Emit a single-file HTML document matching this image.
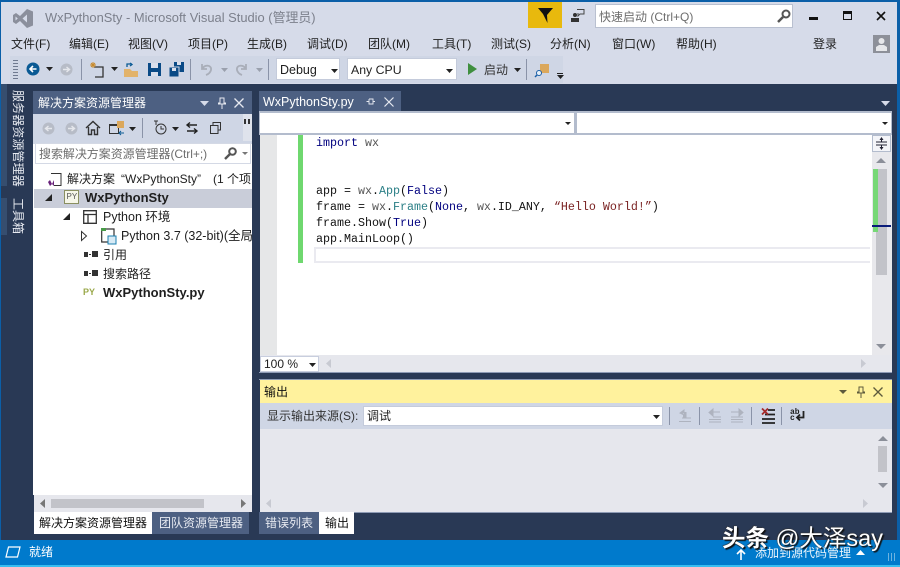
<!DOCTYPE html>
<html><head><meta charset="utf-8"><style>
html,body{margin:0;padding:0;width:900px;height:567px;overflow:hidden;background:#293955}
*{box-sizing:border-box}
.a,.t{position:absolute}
.t{white-space:nowrap;font:12px/16px "Liberation Sans","Noto Sans CJK SC",sans-serif;color:#1e1e1e}
svg{position:absolute;overflow:visible}
.c{font:11.67px/16px "Liberation Mono",monospace;color:#111;left:316px}
.k{color:#00007f}.m{color:#2b7f86}.s{color:#7a2222}.p{color:#555}
.sep{position:absolute;width:1px;background:#8a93a8}
</style></head><body>
<div class="a" style="left:0;top:0;width:900px;height:84px;background:#d6dbe9"></div>
<div class="a" style="left:0;top:0;width:900px;height:2px;background:#0b5fa8"></div>
<div class="a" style="left:0;top:0;width:1px;height:567px;background:#0b5fa8"></div>
<div class="a" style="left:897px;top:0;width:3px;height:567px;background:#0b5fa8"></div>
<div class="a" style="left:4px;top:84px;width:893px;height:456px;background:#293955"></div>
<div class="a" style="left:1px;top:84px;width:6px;height:102px;background:#364e6f"></div>
<div class="a" style="left:1px;top:198px;width:6px;height:37px;background:#364e6f"></div>

<!-- title -->
<svg style="left:13px;top:9px" width="21" height="20"><path d="M14 0 20 2.500V16.500L14 19 7 12 3 15 0 13V6L3 4 7 7ZM2.500 7.500V11.500L4.800 9.500ZM14 5.500 9.500 9.500 14 13.500Z" fill="#8b8f9c" fill-rule="evenodd"/></svg>
<div class="t" style="left:45px;top:10px;font-size:12.900px;color:#7c808c">WxPythonSty - Microsoft Visual Studio (管理员)</div>
<div class="a" style="left:528px;top:2px;width:34px;height:26px;background:#e8b90d"></div>
<svg style="left:538px;top:8px" width="16" height="16"><path d="M0 0H15L9 7 9.500 15 5 6Z" fill="#111"/></svg>
<svg style="left:570px;top:8px" width="16" height="15"><path d="M1 14V10H9V14Z M3 7a2 2 0 1 0 4 0a2 2 0 1 0-4 0Z" fill="#333"/><path d="M7 1.500H14V6H10L8 8V5" fill="none" stroke="#444"/></svg>
<div class="a" style="left:595px;top:4px;width:198px;height:24px;background:#fff;border:1px solid #b9c0d0"></div>
<div class="t" style="left:599px;top:9px;color:#6d6d6d">快速启动 (Ctrl+Q)</div>
<svg style="left:777px;top:9px" width="14" height="14"><circle cx="9" cy="5" r="3.500" fill="none" stroke="#555" stroke-width="2"/><path d="M6 8 1 13" stroke="#555" stroke-width="2.500"/></svg>
<div class="a" style="left:809px;top:17px;width:9px;height:3px;background:#111"></div>
<div class="a" style="left:843px;top:11px;width:9px;height:9px;border:1px solid #111;border-top-width:3px"></div>
<svg style="left:876px;top:11px" width="10" height="10"><path d="M1 1 9 9M9 1 1 9" stroke="#111" stroke-width="1.600"/></svg>

<!-- menu -->
<div class="t" style="left:11px;top:36px">文件(F)</div>
<div class="t" style="left:69px;top:36px">编辑(E)</div>
<div class="t" style="left:128px;top:36px">视图(V)</div>
<div class="t" style="left:188px;top:36px">项目(P)</div>
<div class="t" style="left:247px;top:36px">生成(B)</div>
<div class="t" style="left:307px;top:36px">调试(D)</div>
<div class="t" style="left:368px;top:36px">团队(M)</div>
<div class="t" style="left:432px;top:36px">工具(T)</div>
<div class="t" style="left:491px;top:36px">测试(S)</div>
<div class="t" style="left:550px;top:36px">分析(N)</div>
<div class="t" style="left:612px;top:36px">窗口(W)</div>
<div class="t" style="left:676px;top:36px">帮助(H)</div>
<div class="t" style="left:813px;top:36px">登录</div>
<div class="a" style="left:873px;top:35px;width:17px;height:18px;background:#8d9099"></div>
<svg style="left:873px;top:35px" width="17" height="18"><circle cx="8.500" cy="6" r="3" fill="#e6e7ea"/><path d="M3 16V12L6 10H11L14 12V16Z" fill="#e6e7ea"/></svg>

<!-- toolbar -->
<div class="a" style="left:10px;top:56px;width:553px;height:27px;background:#cfd6e5"></div>
<div class="a" style="left:13px;top:60px;width:5px;height:19px;background:repeating-linear-gradient(#6f7a90 0 1px,transparent 1px 3px)"></div>
<svg style="left:26px;top:62px" width="14" height="14"><circle cx="7" cy="7" r="6.500" fill="#0a5a94"/><path d="M10.500 7H4.500M7 4 4 7 7 10" fill="none" stroke="#fff" stroke-width="1.600"/></svg>
<svg style="left:46px;top:67px" width="8" height="4"><path d="M0 0H7L3.500 4Z" fill="#222"/></svg>
<svg style="left:60px;top:63px" width="13" height="13"><circle cx="6.500" cy="6.500" r="6" fill="#b7bcc7"/><path d="M3 6.500H9M6.500 4 9.500 6.500 6.500 9" fill="none" stroke="#e5e7ec" stroke-width="1.400"/></svg>
<div class="sep" style="left:81px;top:59px;height:21px"></div>
<svg style="left:90px;top:62px" width="15" height="16"><path d="M4 5H13V15H5" fill="none" stroke="#333" stroke-width="1.300"/><path d="M3 0V6M0 3H6M1 1 5 5M5 1 1 5" stroke="#c98a2b"/></svg>
<svg style="left:111px;top:67px" width="8" height="4"><path d="M0 0H7L3.500 4Z" fill="#222"/></svg>
<svg style="left:124px;top:63px" width="15" height="15"><path d="M0 6H6L8 8H14V14H0Z" fill="#e2b36b"/><path d="M3 4V1H8M6 0 8 1.500 6 3" fill="none" stroke="#0a5a94" stroke-width="1.300"/></svg>
<svg style="left:148px;top:63px" width="13" height="13"><path d="M0 0H13V13H0Z" fill="#0a4a86"/><path d="M3 0H10V5H3ZM3 9H10V13H3Z" fill="#d9dfec"/></svg>
<svg style="left:169px;top:62px" width="15" height="15"><path d="M5 0H15V10H5Z" fill="#0a4a86"/><path d="M0 5H10V15H0Z" fill="#0a4a86" stroke="#cfd6e5"/><path d="M8 0H12V3H8ZM3 6H7V9H3Z" fill="#d9dfec"/></svg>
<div class="sep" style="left:190px;top:59px;height:21px"></div>
<svg style="left:199px;top:63px" width="14" height="13"><path d="M3 1V6H8M3 6C6 1 13 2 12 7 11.500 9 10 11 7 12" fill="none" stroke="#a9aeb9" stroke-width="1.800"/></svg>
<svg style="left:221px;top:68px" width="7" height="4"><path d="M0 0H7L3.500 4Z" fill="#9aa0ad"/></svg>
<svg style="left:235px;top:63px" width="14" height="13"><path d="M11 1V6H6M11 6C8 1 1 2 2 7 2.500 9 4 11 7 12" fill="none" stroke="#a9aeb9" stroke-width="1.800"/></svg>
<svg style="left:256px;top:68px" width="7" height="4"><path d="M0 0H7L3.500 4Z" fill="#9aa0ad"/></svg>
<div class="sep" style="left:268px;top:59px;height:21px"></div>
<div class="a" style="left:276px;top:58px;width:64px;height:22px;background:#fff;border:1px solid #c4cbdb"></div>
<div class="t" style="left:280px;top:62px;font-size:12.500px">Debug</div>
<svg style="left:331px;top:69px" width="7" height="4"><path d="M0 0H7L3.500 4Z" fill="#222"/></svg>
<div class="a" style="left:347px;top:58px;width:110px;height:22px;background:#fff;border:1px solid #c4cbdb"></div>
<div class="t" style="left:351px;top:62px;font-size:12.300px">Any CPU</div>
<svg style="left:446px;top:69px" width="7" height="4"><path d="M0 0H7L3.500 4Z" fill="#222"/></svg>
<svg style="left:468px;top:63px" width="9" height="12"><path d="M0 0 9 6 0 12Z" fill="#3f8f3f"/></svg>
<div class="t" style="left:484px;top:62px;color:#333">启动</div>
<svg style="left:514px;top:68px" width="7" height="4"><path d="M0 0H7L3.500 4Z" fill="#222"/></svg>
<div class="sep" style="left:526px;top:59px;height:21px"></div>
<svg style="left:535px;top:62px" width="15" height="16"><path d="M5 2H14V11H5Z" fill="#dba85c"/><circle cx="4" cy="11" r="2.500" fill="#e7f0f8" stroke="#1a5fa8"/><path d="M2 13 0 15" stroke="#1a5fa8" stroke-width="1.500"/></svg>
<div class="a" style="left:557px;top:73px;width:6px;height:1px;background:#222"></div>
<svg style="left:557px;top:75px" width="7" height="4"><path d="M0 0H7L3.500 4Z" fill="#222"/></svg>

<!-- side tabs -->
<div class="t" style="left:10px;top:90px;height:98px;writing-mode:vertical-rl;text-orientation:sideways;color:#e7eaf1;letter-spacing:.1px;line-height:16px">服务器资源管理器</div>
<div class="t" style="left:10px;top:198px;height:38px;writing-mode:vertical-rl;text-orientation:sideways;color:#e7eaf1;line-height:16px">工具箱</div>

<!-- solution explorer -->
<div class="a" style="left:33px;top:91px;width:219px;height:23px;background:#4d6082"></div>
<div class="t" style="left:38px;top:95px;color:#fff">解决方案资源管理器</div>
<svg style="left:200px;top:101px" width="9" height="5"><path d="M0 0H9L4.500 5Z" fill="#d6dbe9"/></svg>
<svg style="left:218px;top:97px" width="8" height="12"><path d="M2 1H6V6H7.500V7H.5V6H2ZM4 7V12" fill="none" stroke="#e6e9f0"/></svg>
<svg style="left:234px;top:98px" width="10" height="10"><path d="M.5.500 9.500 9.500M9.500.5.5 9.500" stroke="#e6e9f0" stroke-width="1.300"/></svg>
<div class="a" style="left:33px;top:114px;width:219px;height:27px;background:#cfd6e5"></div>
<div class="a" style="left:33px;top:141px;width:219px;height:354px;background:#fff"></div>
<div class="a" style="left:33px;top:141px;width:219px;height:3px;background:#cfd6e5"></div>
<svg style="left:42px;top:122px" width="13" height="13"><circle cx="6.500" cy="6.500" r="6" fill="#b7bcc7"/><path d="M10 6.500H4M6.500 4 3.500 6.500 6.500 9" fill="none" stroke="#e5e7ec" stroke-width="1.400"/></svg>
<svg style="left:65px;top:122px" width="13" height="13"><circle cx="6.500" cy="6.500" r="6" fill="#b7bcc7"/><path d="M3 6.500H9M6.500 4 9.500 6.500 6.500 9" fill="none" stroke="#e5e7ec" stroke-width="1.400"/></svg>
<svg style="left:86px;top:121px" width="14" height="14"><path d="M0 7 7 .5 14 7M2.500 6V13.500H5.500V9H8.500V13.500H11.500V6" fill="none" stroke="#333" stroke-width="1.400"/></svg>
<svg style="left:109px;top:121px" width="15" height="14"><path d="M.5 4.500H9.500V12.500H.5Z" fill="none" stroke="#333"/><path d="M0 3H8V5H0Z" fill="#333"/><path d="M8 0H15V7H8Z" fill="#dba85c"/><path d="M11 12H15M12 10 10 12 12 14" stroke="#0a5a94" fill="none"/></svg>
<svg style="left:129px;top:127px" width="7" height="4"><path d="M0 0H7L3.500 4Z" fill="#222"/></svg>
<div class="sep" style="left:142px;top:118px;height:20px"></div>
<svg style="left:153px;top:120px" width="14" height="16"><circle cx="8" cy="9" r="5" fill="none" stroke="#333"/><path d="M8 6V9H11M1 1H5M3 1V5" fill="none" stroke="#333"/></svg>
<svg style="left:172px;top:127px" width="7" height="4"><path d="M0 0H7L3.500 4Z" fill="#222"/></svg>
<svg style="left:186px;top:122px" width="12" height="12"><path d="M1 3H11M4 .5 1 3 4 5.500M11 9H1M8 6.500 11 9 8 11.500" fill="none" stroke="#222" stroke-width="1.400"/></svg>
<svg style="left:210px;top:122px" width="11" height="12"><path d="M3 3V.5H10.500V8H8M.5 3.500H8V11.500H.5Z" fill="none" stroke="#333"/></svg>
<div class="a" style="left:243px;top:114px;width:9px;height:27px;background:#dfe3ec"></div>
<div class="a" style="left:244px;top:119px;width:6px;height:5px;background:repeating-linear-gradient(90deg,#333 0 2px,transparent 2px 4px)"></div>
<div class="a" style="left:35px;top:143px;width:216px;height:21px;background:#fff;border:1px solid #d4d9e5"></div>
<div class="t" style="left:39px;top:146px;color:#6d6d6d;letter-spacing:-.05px">搜索解决方案资源管理器(Ctrl+;)</div>
<svg style="left:224px;top:147px" width="13" height="13"><circle cx="8.500" cy="4.500" r="3.300" fill="none" stroke="#555" stroke-width="2"/><path d="M6 7 1 12" stroke="#555" stroke-width="2.400"/></svg>
<svg style="left:242px;top:152px" width="6" height="3"><path d="M0 0H6L3 3Z" fill="#777"/></svg>

<div class="a" style="left:34px;top:189px;width:218px;height:19px;background:#c9cdd9"></div>
<div class="a" style="left:33px;top:170px;width:219px;height:324px;overflow:hidden">
<svg style="left:14px;top:2px" width="15" height="16"><path d="M4 1.500H14V13.500H7" fill="none" stroke="#333"/><path d="M1 10 3 8 5 12 7 8 7 14 5 12 3 14Z" fill="#68217a"/></svg>
<div class="t" style="left:34px;top:1px">解决方案</div>
<div class="t" style="left:88px;top:1px">“WxPythonSty”</div>
<div class="t" style="left:180px;top:1px">(1 个项目)</div>
<svg style="left:12px;top:24px" width="7" height="7"><path d="M7 0V7H0Z" fill="#222"/></svg>
<svg style="left:31px;top:20px" width="15" height="14"><path d="M.5.500H14.500V13.500H.5Z" fill="#f6f6e8" stroke="#8a8f60"/></svg>
<div class="t" style="left:33.500px;top:19px;font-size:8px;color:#555">PY</div>
<div class="t" style="left:52px;top:20px;font-weight:bold;font-size:13px">WxPythonSty</div>
<svg style="left:30px;top:43px" width="7" height="7"><path d="M7 0V7H0Z" fill="#222"/></svg>
<svg style="left:50px;top:40px" width="14" height="14"><path d="M.7.700H13.300V13.300H.7ZM.7 4.500H13.300M5 4.500V13.300" fill="none" stroke="#333" stroke-width="1.300"/></svg>
<div class="t" style="left:70px;top:39px;font-size:12.500px">Python 环境</div>
<svg style="left:48px;top:61px" width="6" height="10"><path d="M.5.500 5.500 5 .5 9.500Z" fill="#fff" stroke="#333"/></svg>
<svg style="left:68px;top:58px" width="15" height="16"><path d="M.7 1H13V14H.7Z" fill="none" stroke="#333" stroke-width="1.200"/><path d="M0 0H5V3H0Z" fill="#4a9c4a"/><path d="M7 8H15V16H7Z" fill="#d7eaf5" stroke="#1b7fb0"/></svg>
<div class="t" style="left:88px;top:58px;font-size:12.500px">Python 3.7 (32-bit)(全局默认)</div>
<div class="a" style="left:51px;top:82px;width:4px;height:5px;background:#333"></div><div class="a" style="left:56px;top:84px;width:2px;height:1px;background:#333"></div><div class="a" style="left:59px;top:81px;width:6px;height:6px;background:#333"></div>
<div class="t" style="left:70px;top:77px">引用</div>
<div class="a" style="left:51px;top:101px;width:4px;height:5px;background:#333"></div><div class="a" style="left:56px;top:103px;width:2px;height:1px;background:#333"></div><div class="a" style="left:59px;top:100px;width:6px;height:6px;background:#333"></div>
<div class="t" style="left:70px;top:96px">搜索路径</div>
<div class="t" style="left:50px;top:114px;font-size:9px;font-weight:bold;color:#9aa84a">PY</div>
<div class="t" style="left:70px;top:115px;font-weight:bold;font-size:13px">WxPythonSty.py</div>
</div>
<div class="a" style="left:34px;top:495px;width:218px;height:17px;background:#e6e7ed"></div>
<svg style="left:40px;top:499px" width="5" height="9"><path d="M5 0V9L0 4.500Z" fill="#777"/></svg>
<div class="a" style="left:51px;top:499px;width:153px;height:9px;background:#c2c3c9"></div>
<svg style="left:241px;top:499px" width="5" height="9"><path d="M0 0V9L5 4.500Z" fill="#777"/></svg>
<div class="a" style="left:34px;top:512px;width:118px;height:22px;background:#fff"></div>
<div class="t" style="left:39px;top:515px;color:#111">解决方案资源管理器</div>
<div class="a" style="left:152px;top:512px;width:97px;height:22px;background:#4d6082"></div>
<div class="t" style="left:159px;top:515px;color:#e7eaf1">团队资源管理器</div>

<!-- editor tab -->
<div class="a" style="left:259px;top:91px;width:142px;height:20px;background:#4d6082"></div>
<div class="t" style="left:263px;top:94px;color:#fff;font-size:12.500px">WxPythonSty.py</div>
<svg style="left:366px;top:98px" width="9" height="7"><path d="M.5 3.500H3M3 1V6H7V1H3M7 3.500H9" fill="none" stroke="#e6e9f0" stroke-width=".9"/></svg>
<svg style="left:384px;top:97px" width="10" height="10"><path d="M.5.500 9.500 9.500M9.500.5.5 9.500" stroke="#e6e9f0" stroke-width="1.200"/></svg>
<svg style="left:881px;top:101px" width="9" height="5"><path d="M0 0H9L4.500 5Z" fill="#d6dbe9"/></svg>
<div class="a" style="left:259px;top:111px;width:633px;height:24px;background:#b3bccd"></div>
<div class="a" style="left:260px;top:113px;width:314px;height:20px;background:#fff"></div>
<div class="a" style="left:577px;top:113px;width:314px;height:20px;background:#fff"></div>
<svg style="left:565px;top:122px" width="6" height="3"><path d="M0 0H6L3 3Z" fill="#222"/></svg>
<svg style="left:882px;top:122px" width="6" height="3"><path d="M0 0H6L3 3Z" fill="#222"/></svg>

<!-- editor -->
<div class="a" style="left:260px;top:135px;width:632px;height:237px;background:#fff"></div>
<div class="a" style="left:260px;top:135px;width:17px;height:220px;background:#e6e7e8"></div>
<div class="a" style="left:298px;top:135px;width:5px;height:128px;background:#6fd86f"></div>
<div class="a" style="left:314px;top:247px;width:556px;height:16px;border:2px solid #eaeaf0;border-right:none"></div>
<div class="t c" style="top:135px"><span class="k">import</span> <span class="p">wx</span></div>
<div class="t c" style="top:183px">app = <span class="p">wx</span>.<span class="m">App</span>(<span class="k">False</span>)</div>
<div class="t c" style="top:199px">frame = <span class="p">wx</span>.<span class="m">Frame</span>(<span class="k">None</span>, <span class="p">wx</span>.ID_ANY, <span class="s">“Hello World!”</span>)</div>
<div class="t c" style="top:215px">frame.Show(<span class="k">True</span>)</div>
<div class="t c" style="top:231px">app.MainLoop()</div>
<div class="a" style="left:872px;top:135px;width:20px;height:220px;background:#e8e8ec"></div>
<div class="a" style="left:872px;top:135px;width:19px;height:17px;background:#f4f5f9;border:1px solid #b3bccd"></div>
<svg style="left:876px;top:137px" width="11" height="13"><path d="M0 5H11M0 8H11" stroke="#223" /><path d="M5.500 3V5M5.500 8V11" stroke="#223"/><path d="M3.500 3H7.500L5.500 0ZM3.500 10H7.500L5.500 13Z" fill="#223"/></svg>
<svg style="left:876px;top:158px" width="10" height="5"><path d="M0 5H10L5 0Z" fill="#8b8f99"/></svg>
<div class="a" style="left:876px;top:169px;width:11px;height:106px;background:#c2c3c9"></div>
<div class="a" style="left:873px;top:169px;width:5px;height:63px;background:#77d877"></div>
<div class="a" style="left:872px;top:225px;width:19px;height:2px;background:#0a1c7a"></div>
<svg style="left:876px;top:344px" width="10" height="5"><path d="M0 0H10L5 5Z" fill="#8b8f99"/></svg>
<div class="a" style="left:260px;top:355px;width:632px;height:17px;background:#e6e7ed"></div>
<div class="a" style="left:260px;top:356px;width:59px;height:16px;background:#fff;border:1px solid #c8cede"></div>
<div class="t" style="left:264px;top:356px">100 %</div>
<svg style="left:309px;top:363px" width="7" height="4"><path d="M0 0H7L3.500 4Z" fill="#222"/></svg>
<svg style="left:326px;top:359px" width="5" height="9"><path d="M5 0V9L0 4.500Z" fill="#c8cad2"/></svg>
<svg style="left:861px;top:359px" width="5" height="9"><path d="M0 0V9L5 4.500Z" fill="#c8cad2"/></svg>
<div class="a" style="left:259px;top:372px;width:633px;height:1px;background:#8e9bb5"></div>

<!-- output -->
<div class="a" style="left:259px;top:379px;width:633px;height:1px;background:#8e9bb5"></div>
<div class="a" style="left:260px;top:380px;width:632px;height:23px;background:#fff29d"></div>
<div class="t" style="left:264px;top:384px;color:#111">输出</div>
<svg style="left:839px;top:390px" width="8" height="4"><path d="M0 0H8L4 4Z" fill="#5d5a3c"/></svg>
<svg style="left:857px;top:386px" width="8" height="12"><path d="M2 1H6V6H7.500V7H.5V6H2ZM4 7V12" fill="none" stroke="#5d5a3c"/></svg>
<svg style="left:873px;top:387px" width="10" height="10"><path d="M.5.500 9.500 9.500M9.500.5.5 9.500" stroke="#5d5a3c" stroke-width="1.300"/></svg>
<div class="a" style="left:260px;top:403px;width:632px;height:26px;background:#cfd6e5"></div>
<div class="t" style="left:267px;top:408px;color:#333">显示输出来源(S):</div>
<div class="a" style="left:363px;top:406px;width:300px;height:20px;background:#fff;border:1px solid #c4cbdb"></div>
<div class="t" style="left:367px;top:408px">调试</div>
<svg style="left:653px;top:415px" width="7" height="4"><path d="M0 0H7L3.500 4Z" fill="#222"/></svg>
<div class="sep" style="left:669px;top:407px;height:18px"></div>
<svg style="left:679px;top:409px" width="13" height="14"><path d="M5 1 1 4 5 6ZM4 3.500H7V8H4M3 9H12M0 12.500H12" fill="#aeb3bf" stroke="#aeb3bf"/></svg>
<div class="sep" style="left:699px;top:407px;height:18px"></div>
<svg style="left:709px;top:409px" width="13" height="14"><path d="M0 3.500 4 0V7ZM4 3H11M4 8H12M0 10.500H12M0 13H12" fill="#aeb3bf" stroke="#aeb3bf"/></svg>
<svg style="left:731px;top:409px" width="13" height="14"><path d="M12 3.500 8 0V7ZM8 3H0M0 8H12M0 10.500H12M0 13H12" fill="#aeb3bf" stroke="#aeb3bf"/></svg>
<div class="sep" style="left:751px;top:407px;height:18px"></div>
<svg style="left:761px;top:408px" width="14" height="16"><path d="M7 2H14M4 6.500H14M1 11H14M1 15H14" stroke="#222" stroke-width="1.800"/><path d="M1 .5 7 6.500M7 .5 1 6.500" stroke="#a52a2a" stroke-width="1.800"/></svg>
<div class="sep" style="left:781px;top:407px;height:18px"></div>
<div class="t" style="left:790px;top:410px;font:bold 8px/6px 'Liberation Mono',monospace;white-space:pre-line">ab
c</div>
<svg style="left:796px;top:411px" width="9" height="11"><path d="M7.500 0V6.500H1M4 3.500 1 6.500 4 9.500" fill="none" stroke="#222" stroke-width="1.800"/></svg>
<div class="a" style="left:260px;top:429px;width:632px;height:83px;background:#e6e7ed"></div>
<svg style="left:878px;top:436px" width="10" height="5"><path d="M0 5H10L5 0Z" fill="#8b8f99"/></svg>
<div class="a" style="left:878px;top:446px;width:9px;height:26px;background:#c2c3c9"></div>
<svg style="left:878px;top:483px" width="10" height="5"><path d="M0 0H10L5 5Z" fill="#8b8f99"/></svg>
<div class="a" style="left:260px;top:495px;width:632px;height:17px;background:#e6e7ed"></div>
<svg style="left:266px;top:499px" width="5" height="9"><path d="M5 0V9L0 4.500Z" fill="#c8cad2"/></svg>
<svg style="left:863px;top:499px" width="5" height="9"><path d="M0 0V9L5 4.500Z" fill="#c8cad2"/></svg>
<div class="a" style="left:260px;top:512px;width:632px;height:1px;background:#8e9bb5"></div>
<div class="a" style="left:259px;top:512px;width:60px;height:22px;background:#4d6082"></div>
<div class="t" style="left:265px;top:515px;color:#e7eaf1">错误列表</div>
<div class="a" style="left:319px;top:512px;width:35px;height:22px;background:#fff"></div>
<div class="t" style="left:325px;top:515px;color:#111">输出</div>

<!-- status -->
<div class="a" style="left:0;top:540px;width:900px;height:25px;background:#007acc"></div>
<div class="a" style="left:0;top:565px;width:900px;height:2px;background:#37bdf0"></div>
<svg style="left:5px;top:546px" width="16" height="12"><path d="M3.500 1H15L12.500 11H1Z" fill="none" stroke="#fff" stroke-width="1.200"/></svg>
<div class="t" style="left:29px;top:544px;color:#fff">就绪</div>
<svg style="left:736px;top:549px" width="10" height="11"><path d="M5 11V2M1 5 5 1 9 5" fill="none" stroke="#fff" stroke-width="1.600"/></svg>
<div class="t" style="left:755px;top:545px;color:#e9f4fb">添加到源代码管理</div>
<svg style="left:856px;top:550px" width="9" height="5"><path d="M0 5H9L4.500 0Z" fill="#fff"/></svg>
<div class="a" style="left:888px;top:553px;width:8px;height:8px;background:repeating-linear-gradient(90deg,#9ccbe8 0 1px,transparent 1px 3px);opacity:.7"></div>
<div class="t" style="left:722px;top:523px;font-size:23.500px;line-height:30px;color:#fff;text-shadow:1.500px 1.500px 1px #111,-.5px -.5px 1px #333"><b>头条</b> @大泽say</div>
</body></html>
